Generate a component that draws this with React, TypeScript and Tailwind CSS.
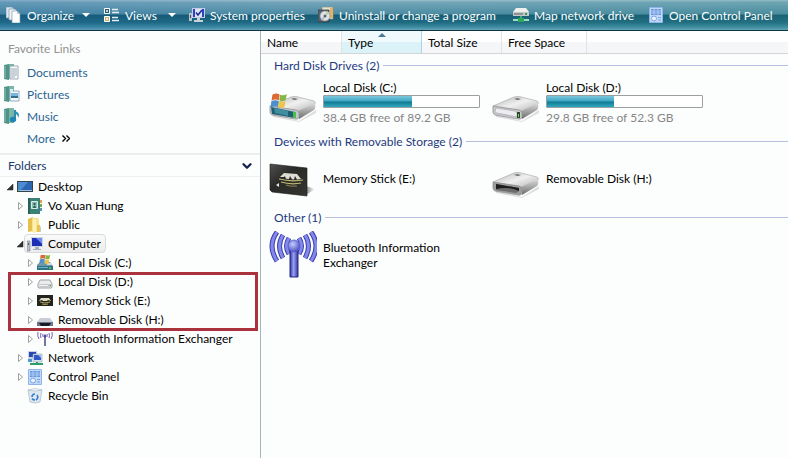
import { ChevronDown } from 'lucide-react';
import type { ComponentType, ReactNode } from 'react';

function Icon16({ children }: { children: ReactNode }) {
  return (
    <svg viewBox="0 0 16 16" className="h-4 w-4 shrink-0" aria-hidden="true">
      {children}
    </svg>
  );
}

/* ---------- toolbar icons ---------- */

const OrganizeIcon = () => (
  <Icon16>
    <path d="M0 0h6l2 2v9H0z" fill="#dfe9f0" stroke="#7d99ab" strokeWidth=".7" />
    <path d="M3 2h6l2 2v9H3z" fill="#eef3f7" stroke="#7d99ab" strokeWidth=".7" />
    <path d="M6 4h5l3 3v9H6z" fill="#fff" stroke="#7d99ab" strokeWidth=".7" />
    <path d="M11 4v3h3z" fill="#b8cad6" />
  </Icon16>
);

const ViewsIcon = () => (
  <Icon16>
    <path d="M.5 1.5h5v5h-5z" fill="#20566e" stroke="#fff" />
    <path d="M.5 9.5h5v5h-5z" fill="#c9b26a" stroke="#fff" />
    <path d="M2 4h2M2 12h2" stroke="#fff" strokeWidth="1.4" />
    <path d="M8 2.5h6M8 5.5h7M8 10.5h6M8 13.5h7" stroke="#e4f0f5" strokeWidth="1.3" />
  </Icon16>
);

const SystemIcon = () => (
  <Icon16>
    <path d="M0 6h3v8H0z" fill="#b9c3cc" />
    <path d="M1 8h1v3H1z" fill="#4a5560" />
    <path d="M3 1h13v10H3z" fill="#c3cde6" />
    <path d="M4 2h11v8H4z" fill="#2f43b8" />
    <path d="M6 2h7v8H6z" fill="#dfe5f6" />
    <path d="M7 5.5l2 2.5 4-5" stroke="#1c2c9c" strokeWidth="1.6" fill="none" />
    <path d="M8 11h3v2h3v2H5v-2h3z" fill="#c8d0d8" />
  </Icon16>
);

const UninstallIcon = () => (
  <Icon16>
    <path d="M4 0h11v12H4z" fill="#e9e2cf" stroke="#9a8e70" strokeWidth=".7" />
    <path d="M12 1h3v10h-3z" fill="#e3b067" />
    <path d="M0 3h11v12H0z" fill="#59656c" stroke="#2c383f" strokeWidth=".7" />
    <circle cx="7" cy="9" r="5" fill="#dfe3e5" stroke="#7d8991" strokeWidth=".6" />
    <path d="M7 9l2-5 3 2z" fill="#bcd0a6" />
    <path d="M7 9l-2 5-2.500-2z" fill="#b9b3cd" />
    <circle cx="7" cy="9" r="1.5" fill="#59656c" />
  </Icon16>
);

const MapDriveIcon = () => (
  <Icon16>
    <path d="M3 1h10l3 4v4H0V5z" fill="#efefec" />
    <path d="M0 5h16v4H0z" fill="#c4c8c8" />
    <path d="M1 6h9v2H1z" fill="#8d9494" />
    <path d="M12 6h2v2h-2z" fill="#32a34a" />
    <path d="M7 9h2v3H7z" fill="#3fb268" />
    <path d="M0 12h16v2H0z" fill="#9fdcc0" />
    <path d="M5 11h6v4H5z" fill="#2aa85c" />
  </Icon16>
);

const ControlPanelIcon = () => (
  <Icon16>
    <rect x="1" y="0" width="14" height="16" rx="1" fill="#8fb4ea" />
    <path d="M2 1h12v14H2z" fill="#c2dafa" />
    <path d="M3 2h10v6H3z" fill="#6593dc" />
    <path d="M3 4h10M3 6h10M6 2v6M10 2v6" stroke="#b5d0f6" strokeWidth=".9" />
    <circle cx="6" cy="11.500" r="2.500" fill="#e9f2fd" stroke="#7aa3df" />
    <path d="M10 10.500h3M10 13h3" stroke="#7aa3df" strokeWidth="1.200" />
  </Icon16>
);

/* ---------- favourite links ---------- */

const Book = ({ children }: { children: ReactNode }) => (
  <Icon16>
    <path d="M0 1l5-1v16l-5-1z" fill="#4f9388" />
    <path d="M5 0h5v15H5z" fill="#7bb5a6" />
    <path d="M1 2v12" stroke="#8fc4b6" />
    {children}
  </Icon16>
);

const DocumentsIcon = () => (
  <Book>
    <path d="M6 2h8v13H6z" fill="#f8fafb" stroke="#8c9aa5" strokeWidth=".8" />
    <path d="M7 5h6M7 7h6M7 9h6M7 11h6M7 13h4" stroke="#8496a8" strokeWidth=".8" />
  </Book>
);

const PicturesIcon = () => (
  <Book>
    <path d="M6 5h9v10H6z" fill="#f4f9fc" stroke="#7e9bb0" strokeWidth=".8" />
    <path d="M7 7h7v3H7z" fill="#79b5dc" />
    <path d="M7 10h7v2H7z" fill="#356f8f" />
    <path d="M6 3h3v3H6z" fill="#d5ebf4" />
  </Book>
);

const MusicIcon = () => (
  <Book>
    <path d="M11 2v9" stroke="#1c79a4" strokeWidth="1.8" />
    <path d="M11 1c0 3 4 3 4 6 0 1-1 3-1 3 .5-4-3-4-3-5z" fill="#2793be" />
    <ellipse cx="9" cy="11.500" rx="3.2" ry="2.800" fill="#1c86b2" />
  </Book>
);

/* ---------- folder tree icons ---------- */

const DesktopIcon = () => (
  <Icon16>
    <path d="M0 2h16v11H0z" fill="#33424f" />
    <path d="M1 3h14v8H1z" fill="#2a66b2" />
    <path d="M1 3h10L4 11H1z" fill="#4c8dd2" />
    <path d="M1 11.500h14" stroke="#9cc0e0" />
    <path d="M1 11h2v1H1z" fill="#6fc07a" />
  </Icon16>
);

const UserIcon = () => (
  <Icon16>
    <path d="M1 0h12v16H1z" fill="#3c8175" />
    <path d="M1 0h2v16H1z" fill="#2a6158" />
    <path d="M4.500 3.500h6v7h-6z" fill="#8fc0b4" stroke="#d7ebe5" />
    <path d="M6 10c0-3 3-3 3 0z" fill="#2c665b" />
    <circle cx="7.500" cy="6" r="1.200" fill="#2c665b" />
    <path d="M13 2h2v3h-2z" fill="#d5a648" />
    <path d="M13 6h2v3h-2z" fill="#71a854" />
    <path d="M13 10h2v3h-2z" fill="#5a8fc2" />
  </Icon16>
);

const FolderIcon = () => (
  <Icon16>
    <path d="M1 2l5-2v14l-5 1z" fill="#e6bf4c" />
    <path d="M5 1h6l1 2v12H5z" fill="#f8e38d" />
    <path d="M6 3l3-1v13l-3 1z" fill="#fcf0b5" />
    <path d="M10 8h3v7h-3z" fill="#e9c455" />
    <path d="M13 10l1-1v6h-1z" fill="#bcd0db" />
  </Icon16>
);

const ComputerIcon = () => (
  <Icon16>
    <path d="M0 5h3v10H0z" fill="#b5bdc6" stroke="#7c858e" strokeWidth=".6" />
    <path d="M1 7h1v2H1z" fill="#4d5863" />
    <path d="M4 1h12v10H4z" fill="#cdd6e4" />
    <path d="M5 2h10v8H5z" fill="#1c2fb4" />
    <path d="M9 2h6v6z" fill="#6f8df0" />
    <path d="M8 11h4v2h2v1H6v-1h2z" fill="#a8b0bc" />
  </Icon16>
);

const WindowsFlag = () => (
  <>
    <path d="M2 1.500q3-2 6-.3L7.400 6Q4.500 4.600 1.300 6.200z" fill="#dd6a35" />
    <path d="M8.400 1.400q2.600 1.200 5.600-.4L13 6q-2.600 1.200-5.200.2z" fill="#84b545" />
    <path d="M1.100 6.800q3.200-1.600 6.200-.2l-.6 5q-2.800-1.300-6.200.4z" fill="#4d8fcc" />
    <path d="M7.700 6.800q2.600 1.100 5.200-.1l-.8 5q-2.700 1.200-5.100.1z" fill="#f0c545" />
  </>
);

const DriveCIcon = () => (
  <Icon16>
    <path d="M0 10l3-3h10l3 4v4H0z" fill="#6d9aa8" />
    <path d="M0 11h16v4H0z" fill="#2d7287" />
    <path d="M1 12h10v1H1z" fill="#6db4c4" />
    <path d="M10 8h4l1 2h-5z" fill="#cfd9de" />
    <path d="M12 12h2v2h-2z" fill="#52bd4b" />
    <g transform="translate(2 -1) scale(.8)">
      <WindowsFlag />
    </g>
  </Icon16>
);

const DriveIcon = () => (
  <Icon16>
    <path d="M3 6h10l2 4v3q0 1-1 1H2q-1 0-1-1v-3z" fill="#ececec" stroke="#8b9092" strokeWidth=".8" />
    <path d="M1 10h14v3H1z" fill="#c3c7c9" />
    <path d="M2 11h9v1H2z" fill="#f7f7f7" />
    <path d="M13 11h1v1h-1z" fill="#4e9a4c" />
  </Icon16>
);

const StickIcon = () => (
  <Icon16>
    <path d="M0 2h16v11H0z" fill="#24241f" />
    <path d="M2 8l2-3h8l2 3-3-1-1 1H6L5 7z" fill="#dedbc4" />
    <path d="M3 9q5 2 10 0M5 11q3 1 6 0" stroke="#b5ad62" strokeWidth=".9" fill="none" />
  </Icon16>
);

const RemovableIcon = () => (
  <Icon16>
    <path d="M3 6h10l3 4v4H0v-4z" fill="#c9ced4" />
    <path d="M0 10h16v4H0z" fill="#6f7688" />
    <path d="M2 11h12l-2 3H4z" fill="#181a26" />
  </Icon16>
);

const AntennaSmallIcon = () => (
  <Icon16>
    <g fill="none" stroke="#7a5cae">
      <path d="M1 1q-1 4 1 7M4 2q-1 3 0 5M6 3q-.8 1.500.2 3M15 1q1 4-1 7M12 2q1 3 0 5M10 3q.8 1.500-.2 3" />
    </g>
    <circle cx="8" cy="5" r="1.400" fill="#4a47a8" />
    <path d="M8 6v9" stroke="#3a3a78" strokeWidth="1.400" />
  </Icon16>
);

const NetworkIcon = () => (
  <Icon16>
    <path d="M1 1h9v8H1z" fill="#c9d5e6" />
    <path d="M2 2h7v5H2z" fill="#2747b4" />
    <path d="M6 4h9v8H6z" fill="#d8e1ee" stroke="#8796aa" strokeWidth=".5" />
    <path d="M7 5h7v5H7z" fill="#3157c8" />
    <path d="M11 5h3v3z" fill="#9ab4f2" />
    <path d="M1 9h4v3H1z" fill="#4e9ccc" />
    <path d="M9 12h2v2H9zM3 13h13v2H3z" fill="#2f9f6a" />
  </Icon16>
);

const RecycleIcon = () => (
  <Icon16>
    <path d="M1 2h14l-2 12q-5 2-10 0z" fill="#dde8ef" stroke="#a9b9c4" strokeWidth=".7" />
    <path d="M1 2q7-3 14 0-7 2-14 0z" fill="#f5f9fb" stroke="#a9b9c4" strokeWidth=".6" />
    <path d="M5 9q0-3 3-3M10 7q2 3-1 5M8 12q-2 0-3-1.500" fill="none" stroke="#3580cf" strokeWidth="1.600" />
  </Icon16>
);

/* ---------- 48px drive icons ---------- */

const DriveBody = ({ id, face, children }: { id: string; face: string; children: ReactNode }) => (
  <svg viewBox="0 0 48 48" className="h-12 w-12 shrink-0" aria-hidden="true">
    <defs>
      <linearGradient id={`${id}-top`} x1="0" y1="0" x2="1" y2="1">
        <stop offset="0" stopColor="#b4b4b4" />
        <stop offset=".5" stopColor="#f0f0f0" />
        <stop offset="1" stopColor="#b0b0b0" />
      </linearGradient>
      <linearGradient id={`${id}-side`} x1="0" y1="0" x2="0" y2="1">
        <stop offset="0" stopColor="#dedede" />
        <stop offset="1" stopColor="#6c6c6c" />
      </linearGradient>
    </defs>
    <path d="M4 36l26 6 17-11v3L30 43 4 38z" fill="#000" opacity=".12" />
    <path d="M1 27L22 18q3-1 6-.3L45 22q2 1 1 3L29 33z" fill={`url(#${id}-top)`} stroke="#a2a2a2" strokeWidth=".6" />
    <path d="M29 32l17-8q1 5-1 7L30 40z" fill={`url(#${id}-side)`} />
    <path d="M1 27l26 4q3 1 3 3v4q-1 3-4 2L3 36q-2-1-2-3z" fill={face} stroke="#929292" strokeWidth=".8" />
    <path d="M25 19l4 1-3 1-4-1z" fill="#6c6c6c" />
    {children}
  </svg>
);

const LargeDriveC = () => (
  <DriveBody id="drv-c" face="#bfc7c9">
    <path d="M2 28l24 5v6L3 35z" fill="#1f5f72" />
    <path d="M5 29l14 3v5L6 34z" fill="#3f8fa0" />
    <path d="M24 33h3v6h-3z" fill="#4ec04a" />
    <g transform="translate(1 14) scale(1.2)">
      <WindowsFlag />
    </g>
  </DriveBody>
);

const LargeDrive = () => (
  <DriveBody id="drv-d" face="#c9c9cd">
    <path d="M4 29l19 3q2 1 2 2v4L5 34q-2 0-2-2z" fill="#ececf2" stroke="#a0a0a6" strokeWidth=".6" />
    <path d="M25 33h3v6h-3z" fill="#31452e" />
    <path d="M26 35h1v3h-1z" fill="#5fdd4b" />
  </DriveBody>
);

const LargeRemovable = () => (
  <DriveBody id="drv-h" face="#9c9c9c">
    <path d="M4 29l23 4v3L24 38 4 35z" fill="#6c6c6c" />
    <path d="M4 29l23 4v3Q16 31 4 34z" fill="#1c1c1c" />
  </DriveBody>
);

const LargeStick = () => (
  <svg viewBox="0 0 48 48" className="h-12 w-12 shrink-0" aria-hidden="true">
    <defs>
      <linearGradient id="stick" x1="0" y1="0" x2="1" y2="1">
        <stop offset="0" stopColor="#50504e" />
        <stop offset=".4" stopColor="#2a2a28" />
        <stop offset="1" stopColor="#343430" />
      </linearGradient>
      <linearGradient id="stick-shadow">
        <stop offset="0" stopColor="#000" stopOpacity=".45" />
        <stop offset="1" stopColor="#000" stopOpacity="0" />
      </linearGradient>
    </defs>
    <path d="M37 40l9-6-9-3z" fill="url(#stick-shadow)" />
    <path d="M1 9l37 4v28L3 37l-2-2z" fill="url(#stick)" stroke="#1b1b1a" strokeWidth=".6" />
    <path d="M11 22l4-4 13 1 4 5-4 .5-2-3.500-1 3.500-2-.2-2-3.300-1 3-3-.3-1-2.700-1 1z" fill="#dfddd3" />
    <path d="M10 24q12 3 24 1M12 27q10 3 20 1" fill="none" stroke="#c2bb72" strokeWidth="1.2" />
    <path d="M17 30q5 2 11 1" stroke="#8b8650" fill="none" />
    <path d="M10 28v4l-3-2z" fill="#e5e5e2" />
  </svg>
);

const LargeAntenna = () => (
  <svg viewBox="0 0 48 48" className="h-12 w-12 shrink-0" aria-hidden="true">
    <defs>
      <radialGradient id="ball" cx=".4" cy=".35" r=".7">
        <stop offset="0" stopColor="#c6ccff" />
        <stop offset="1" stopColor="#4449bd" />
      </radialGradient>
      <linearGradient id="mast">
        <stop offset="0" stopColor="#3437a0" />
        <stop offset=".45" stopColor="#9aa0f5" />
        <stop offset="1" stopColor="#33369a" />
      </linearGradient>
    </defs>
    {['outline', 'fill'].map((layer) => (
      <g
        key={layer}
        fill="none"
        stroke={layer === 'outline' ? '#3c40a6' : '#8388ee'}
        strokeWidth={layer === 'outline' ? 5 : 3}
      >
        <path d="M8 1q-10 14 0 29M14 4q-7 11 0 23M20 7q-5 8 0 16" />
        <path d="M42 1q10 14 0 29M36 4q7 11 0 23M30 7q5 8 0 16" />
      </g>
    ))}
    <path d="M21 19h8v27h-8z" fill="url(#mast)" stroke="#26287f" />
    <circle cx="25" cy="15" r="6" fill="url(#ball)" stroke="#5a5ed0" strokeWidth=".8" />
  </svg>
);

/* ---------- data ---------- */

const TOOLS = [
  { label: 'Organize', icon: OrganizeIcon, width: 'w-[98px]', menuWidth: 'w-[50px]' },
  { label: 'Views', icon: ViewsIcon, width: 'w-[85px]', menuWidth: 'w-[38px]' },
  { label: 'System properties', icon: SystemIcon, width: 'w-[129px]' },
  { label: 'Uninstall or change a program', icon: UninstallIcon, width: 'w-[195px]' },
  { label: 'Map network drive', icon: MapDriveIcon, width: 'w-[135px]' },
  { label: 'Open Control Panel', icon: ControlPanelIcon, width: 'w-[135px]' },
];

const FAVORITES = [
  { label: 'Documents', icon: DocumentsIcon },
  { label: 'Pictures', icon: PicturesIcon },
  { label: 'Music', icon: MusicIcon },
];

type Node = {
  label: string;
  icon: ComponentType;
  level: 0 | 1 | 2;
  state: 'open' | 'closed' | 'leaf';
  selected?: boolean;
};

const TREE_TOP: Node[] = [
  { label: 'Desktop', icon: DesktopIcon, level: 0, state: 'open' },
  { label: 'Vo Xuan Hung', icon: UserIcon, level: 1, state: 'closed' },
  { label: 'Public', icon: FolderIcon, level: 1, state: 'closed' },
  { label: 'Computer', icon: ComputerIcon, level: 1, state: 'open', selected: true },
  { label: 'Local Disk (C:)', icon: DriveCIcon, level: 2, state: 'closed' },
];

const TREE_MARKED: Node[] = [
  { label: 'Local Disk (D:)', icon: DriveIcon, level: 2, state: 'closed' },
  { label: 'Memory Stick (E:)', icon: StickIcon, level: 2, state: 'closed' },
  { label: 'Removable Disk (H:)', icon: RemovableIcon, level: 2, state: 'closed' },
];

const TREE_BOTTOM: Node[] = [
  { label: 'Bluetooth Information Exchanger', icon: AntennaSmallIcon, level: 2, state: 'closed' },
  { label: 'Network', icon: NetworkIcon, level: 1, state: 'closed' },
  { label: 'Control Panel', icon: ControlPanelIcon, level: 1, state: 'closed' },
  { label: 'Recycle Bin', icon: RecycleIcon, level: 1, state: 'leaf' },
];

const INDENT = { 0: 'pl-1.5', 1: 'pl-4', 2: 'pl-[26px]' };

/* ---------- parts ---------- */

function Toolbar() {
  return (
    <nav className="flex h-[31px] shrink-0 items-center border-b border-[#0b3547] bg-[linear-gradient(to_right,#2060b030,#2060b000_40%,#40a08020),linear-gradient(to_bottom,#9dc0cf_0%,#74a5b9_8%,#4b8ba3_47%,#155a72_50%,#1e6a82_75%,#3c8aa2_90%,#6aa5b8_100%)] pl-1.5 text-white">
      {TOOLS.map(({ label, icon: Icon, width, menuWidth }) => (
        <button key={label} type="button" className={`flex shrink-0 items-center gap-[5px] whitespace-nowrap ${width}`}>
          <Icon />
          <span className={menuWidth ? `text-left ${menuWidth}` : ''}>{label}</span>
          {menuWidth && (
            <svg viewBox="0 0 8 4" className="h-1 w-2 shrink-0" aria-hidden="true">
              <path d="M0 0h8L4 4z" fill="#fff" />
            </svg>
          )}
        </button>
      ))}
    </nav>
  );
}

function Expander({ state }: { state: Node['state'] }) {
  return (
    <svg viewBox="0 0 8 8" className="h-2 w-2 shrink-0" aria-hidden="true">
      {state === 'open' && <path d="M7 1v6H1z" fill="#333" stroke="#222" strokeWidth=".5" />}
      {state === 'closed' && <path d="M2.500.5v7l4-3.500z" fill="#fff" stroke="#a0a0a0" />}
    </svg>
  );
}

function TreeRow({ node }: { node: Node }) {
  const Icon = node.icon;
  return (
    <li className={`flex h-[19px] items-center ${INDENT[node.level]}`}>
      <Expander state={node.state} />
      <button
        type="button"
        className={`flex h-[19px] items-center gap-[5px] rounded-sm border pr-1 pl-0.5 whitespace-nowrap ${
          node.selected ? 'border-[#dadada] bg-gradient-to-b from-[#fafafa] to-[#ececec]' : 'border-transparent'
        }`}
      >
        <Icon />
        {node.label}
      </button>
    </li>
  );
}

function Sidebar() {
  return (
    <aside className="w-[261px] shrink-0 border-r border-[#a9b5bd]">
      <h2 className="flex h-[30px] items-center pt-1 pl-2 text-[#929292]">Favorite Links</h2>
      <ul className="pl-1 text-[#2a6491]">
        {FAVORITES.map(({ label, icon: Icon }) => (
          <li key={label}>
            <a href="#" className="flex h-[22px] items-center gap-[7px]">
              <Icon />
              {label}
            </a>
          </li>
        ))}
        <li>
          <a href="#" className="flex h-[22px] items-center gap-[7px] pl-[23px]">
            More
            <svg viewBox="0 0 8 7" className="h-[7px] w-2" aria-hidden="true">
              <path d="M.5.5l3 3-3 3M4.500.5l3 3-3 3" fill="none" stroke="#000" strokeWidth="1.400" />
            </svg>
          </a>
        </li>
      </ul>
      <button
        type="button"
        className="mt-1 flex h-6 w-full items-center justify-between border-t-2 border-b border-t-[#ededed] border-b-[#f0f0f0] pr-1.5 pl-2 text-[#1e3a6c]"
      >
        Folders
        <ChevronDown size={14} strokeWidth={4} className="text-[#14264f]" />
      </button>
      <ul className="text-black">
        {TREE_TOP.map((node) => (
          <TreeRow key={node.label} node={node} />
        ))}
        <li className="relative">
          <ul>
            {TREE_MARKED.map((node) => (
              <TreeRow key={node.label} node={node} />
            ))}
          </ul>
          {/* highlight frame */}
          <div className="pointer-events-none absolute top-0 right-0.5 -bottom-0.5 left-2 border-3 border-[#a9323c]" />
        </li>
        {TREE_BOTTOM.map((node) => (
          <TreeRow key={node.label} node={node} />
        ))}
      </ul>
    </aside>
  );
}

function ColumnHeader() {
  const cell = 'flex h-full items-center border-r border-[#dfe3e6] pl-1.5';
  return (
    <div className="flex h-[23px] items-center border-b border-[#d5d5d5] bg-gradient-to-b from-white from-50% to-[#f5f6f7] to-50% text-black">
      <button type="button" className={`${cell} w-[81px]`}>
        Name
      </button>
      <button
        type="button"
        className="relative flex h-full w-20 items-center border-r border-[#a8d5e6] bg-gradient-to-b from-[#f0fafd] from-50% to-[#dcf2f9] to-50% pl-1.5"
      >
        Type
        <svg viewBox="0 0 8 4" className="absolute top-0.5 left-9 h-1 w-2" aria-hidden="true">
          <path d="M0 4l4-4 4 4z" fill="#4c7a94" />
        </svg>
      </button>
      <button type="button" className={`${cell} w-20`}>
        Total Size
      </button>
      <button type="button" className={`${cell} w-[85px]`}>
        Free Space
      </button>
    </div>
  );
}

function Group({ title, children }: { title: string; children: ReactNode }) {
  return (
    <section>
      <h3 className="flex h-[19px] items-center gap-1 pl-[13px] text-[#1e3a80]">
        {title}
        <span className="h-px flex-1 bg-[#b6bfdc]" />
      </h3>
      <div className="grid grid-cols-[223px_223px] pl-2">{children}</div>
    </section>
  );
}

function Item({ icon, name, used, detail }: { icon: ReactNode; name: string; used?: number; detail?: string }) {
  return (
    <div className="flex h-[57px] items-center gap-1.5 pb-0.5 text-black">
      {icon}
      <div>
        <div className="max-w-[140px]">{name}</div>
        {used !== undefined && (
          <>
            <div
              role="meter"
              aria-label={name}
              aria-valuemin={0}
              aria-valuemax={100}
              aria-valuenow={used}
              className="h-[13px] w-[157px] rounded-[1px] border border-[#9a9fa1] bg-white"
            >
              <div
                className="h-full bg-[linear-gradient(to_bottom,#7cc8dc_0%,#3ba5c2_48%,#107890_52%,#2fa8c0_100%)]"
                style={{ width: `${used}%` }}
              />
            </div>
            <div className="mt-0.5 text-[#868686]">{detail}</div>
          </>
        )}
      </div>
    </div>
  );
}

export default function App() {
  return (
    <div className="flex min-h-screen flex-col overflow-hidden bg-[#fcfdfd] font-['Lato',sans-serif] text-[12px] leading-[15px]">
      <Toolbar />
      <div className="flex flex-1">
        <Sidebar />
        <main className="min-w-0 flex-1">
          <ColumnHeader />
          <div className="pt-0.5">
            <Group title="Hard Disk Drives (2)">
              <Item icon={<LargeDriveC />} name="Local Disk (C:)" used={57} detail="38.4 GB free of 89.2 GB" />
              <Item icon={<LargeDrive />} name="Local Disk (D:)" used={43} detail="29.8 GB free of 52.3 GB" />
            </Group>
            <Group title="Devices with Removable Storage (2)">
              <Item icon={<LargeStick />} name="Memory Stick (E:)" />
              <Item icon={<LargeRemovable />} name="Removable Disk (H:)" />
            </Group>
            <Group title="Other (1)">
              <Item icon={<LargeAntenna />} name="Bluetooth Information Exchanger" />
            </Group>
          </div>
        </main>
      </div>
    </div>
  );
}
